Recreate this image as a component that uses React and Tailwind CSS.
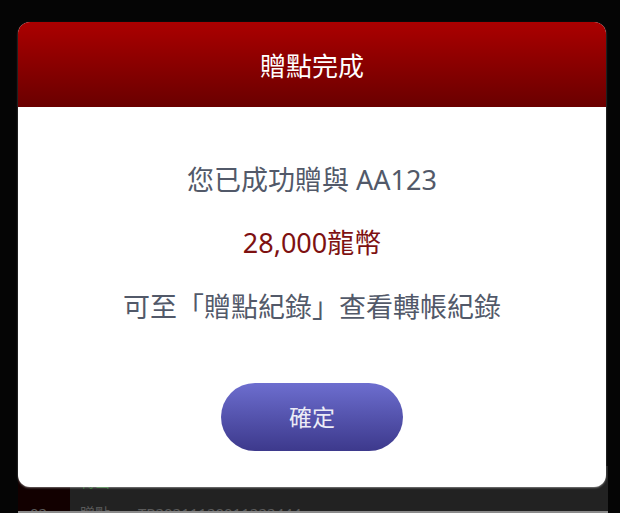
export default function App() {
  return (
    <div className="relative w-[620px] h-[513px] overflow-hidden bg-[#050505] font-['Noto_Sans','Noto_Sans_CJK_TC',sans-serif]">
      {/* record table behind the dialog */}
      <div className="pt-[466px] pl-[18px] pr-[12px] text-[15px] leading-[20px] text-[#5a5a5a]">
        <div className="flex h-[31px] bg-[#222222]">
          <div className="w-[52px] bg-[#120000]"></div>
          <div className="flex items-end pb-[6px]">
            <div className="w-[68px] pl-[10px] text-[#2a6a2a]">轉出</div>
            <div className="w-[205px]">2021/11/20 10:10:10</div>
            <div className="w-[130px]">AA123456 -</div>
            <div className="text-[#2a6a2a]">5000</div>
          </div>
        </div>
        <div className="flex h-[14px] items-start overflow-hidden bg-[#222222]">
          <div className="w-[52px] h-full bg-[#120000] pl-[12px] pt-[6px]">02</div>
          <div className="w-[68px] pl-[10px] pt-[6px]">贈點</div>
          <div className="pt-[6px]">TP20211120011222444</div>
        </div>
        <div className="h-[2px] bg-[#8a8a8a]"></div>
      </div>

      {/* dialog */}
      <div className="absolute left-[18px] top-[22px] w-[588px] h-[465px] rounded-[12px] overflow-hidden bg-white flex flex-col shadow-[0_1px_2px_rgba(255,255,255,0.4)]">
        <div className="h-[85px] shrink-0 pt-[4px] flex items-center justify-center bg-gradient-to-b from-[#ab0000] to-[#6a0000] text-white text-[26px]">
          贈點完成
        </div>
        <div className="flex flex-col items-center pt-[57px] text-[27px] leading-[32px] text-[#525969]">
          <div>您已成功贈與 AA123</div>
          <div className="mt-[31px] text-[#7e1111]">28,000龍幣</div>
          <div className="mt-[32px]">可至「贈點紀錄」查看轉帳紀錄</div>
          <button className="mt-[60px] w-[182px] h-[68px] rounded-full bg-gradient-to-b from-[#6d6ecf] to-[#3d398c] text-[#ececf6] text-[23px]">
            確定
          </button>
        </div>
      </div>
    </div>
  );
}
